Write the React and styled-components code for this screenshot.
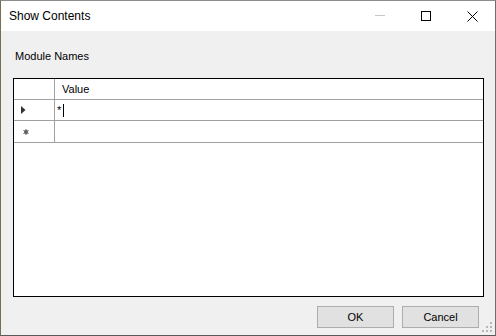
import React from 'react';
import styled, { createGlobalStyle } from 'styled-components';

const GlobalStyle = createGlobalStyle`
  html, body {
    margin: 0;
    padding: 0;
    background: #ffffff;
  }
  body {
    font-family: "Liberation Sans", Arial, sans-serif;
    font-size: 11px;
    color: #000;
  }
`;

const Window = styled.div`
  position: relative;
  box-sizing: border-box;
  width: 496px;
  height: 336px;
  display: flex;
  flex-direction: column;
  background: #f0f0f0;
  border-top: 1px solid #8c8c8c;
  border-left: 1px solid #77704f;
  border-right: 1px solid #6e6e6e;
  border-bottom: 1px solid #5a5a5a;
  overflow: hidden;
`;

const TitleBar = styled.div`
  height: 30px;
  display: flex;
  align-items: center;
  background: #ffffff;
`;

const Title = styled.div`
  flex: 1;
  padding-left: 8px;
  font-size: 12px;
`;

const Controls = styled.div`
  display: flex;
  height: 100%;
`;

const ControlButton = styled.button`
  width: 46px;
  height: 30px;
  padding: 0;
  border: 0;
  background: transparent;
  display: flex;
  align-items: center;
  justify-content: center;
  color: ${p => (p.disabled ? '#c6c6c6' : '#000')};
`;

const Body = styled.div`
  flex: 1;
  display: flex;
  flex-direction: column;
  padding: 19px 11px 7px 12px;
`;

const Label = styled.div`
  height: 13px;
  line-height: 13px;
  margin-bottom: 15px;
  padding-left: 2px;
`;

const Grid = styled.div`
  box-sizing: border-box;
  height: 219px;
  border: 1px solid #000;
  background: #ffffff;
`;

const GridRow = styled.div`
  display: flex;
  height: ${p => p.h}px;
  border-bottom: 1px solid #a0a0a0;
`;

const RowHeader = styled.div`
  box-sizing: border-box;
  width: 41px;
  border-right: 1px solid #a0a0a0;
  display: flex;
  align-items: center;
  padding-left: ${p => p.pad || 7}px;
`;

const Cell = styled.div`
  flex: 1;
  display: flex;
  align-items: center;
  padding-left: ${p => p.pad || 0}px;
`;

const EditText = styled.span`
  display: flex;
  align-items: center;
  font-size: 11px;
  line-height: 13px;
`;

const Caret = styled.span`
  display: inline-block;
  width: 1px;
  height: 13px;
  margin-left: 2px;
  background: #000;
`;

const Footer = styled.div`
  display: flex;
  justify-content: flex-end;
  gap: 8px;
  margin-top: 9px;
  padding-right: 5px;
`;

const Button = styled.button`
  box-sizing: border-box;
  width: 77px;
  height: 22px;
  padding: 0;
  border: 1px solid #adadad;
  background: #e1e1e1;
  font-family: "Liberation Sans", Arial, sans-serif;
  font-size: 11px;
  color: #000;
`;

const Grip = styled.svg`
  position: absolute;
  right: 1px;
  bottom: 1px;
`;

export default function App() {
  return (
    <>
      <GlobalStyle />
      <Window>
        <TitleBar>
          <Title>Show Contents</Title>
          <Controls>
            <ControlButton disabled>
              <svg width="10" height="10" viewBox="0 0 10 10">
                <rect x="0" y="4" width="10" height="1" fill="currentColor" />
              </svg>
            </ControlButton>
            <ControlButton>
              <svg width="10" height="10" viewBox="0 0 10 10">
                <rect x="0.5" y="0.5" width="9" height="9" fill="none" stroke="currentColor" />
              </svg>
            </ControlButton>
            <ControlButton>
              <svg width="11" height="11" viewBox="0 0 11 11">
                <path d="M0.5 0.5 L10.5 10.5 M10.5 0.5 L0.5 10.5" stroke="currentColor" strokeWidth="1" />
              </svg>
            </ControlButton>
          </Controls>
        </TitleBar>
        <Body>
          <Label>Module Names</Label>
          <Grid>
            <GridRow h={20}>
              <RowHeader />
              <Cell pad={7}>Value</Cell>
            </GridRow>
            <GridRow h={20}>
              <RowHeader>
                <svg width="5" height="8" viewBox="0 0 5 8">
                  <polygon points="0,0 4.5,4 0,8" fill="#333" />
                </svg>
              </RowHeader>
              <Cell pad={2}>
                <EditText>
                  *<Caret />
                </EditText>
              </Cell>
            </GridRow>
            <GridRow h={21}>
              <RowHeader pad={9}>
                <svg width="6" height="6" viewBox="0 0 6 6">
                  <circle cx="3" cy="3" r="2" fill="#555" />
                  <path d="M3 0 V6 M0.4 1.5 L5.6 4.5 M5.6 1.5 L0.4 4.5" stroke="#666" strokeWidth="1" />
                </svg>
              </RowHeader>
              <Cell />
            </GridRow>
          </Grid>
          <Footer>
            <Button>OK</Button>
            <Button>Cancel</Button>
          </Footer>
        </Body>
        <Grip width="12" height="12" viewBox="0 0 12 12">
          <rect x="8" y="0" width="2" height="2" fill="#b8b8b8" />
          <rect x="4" y="4" width="2" height="2" fill="#b8b8b8" />
          <rect x="8" y="4" width="2" height="2" fill="#b8b8b8" />
          <rect x="0" y="8" width="2" height="2" fill="#b8b8b8" />
          <rect x="4" y="8" width="2" height="2" fill="#b8b8b8" />
          <rect x="8" y="8" width="2" height="2" fill="#b8b8b8" />
        </Grip>
      </Window>
    </>
  );
}
